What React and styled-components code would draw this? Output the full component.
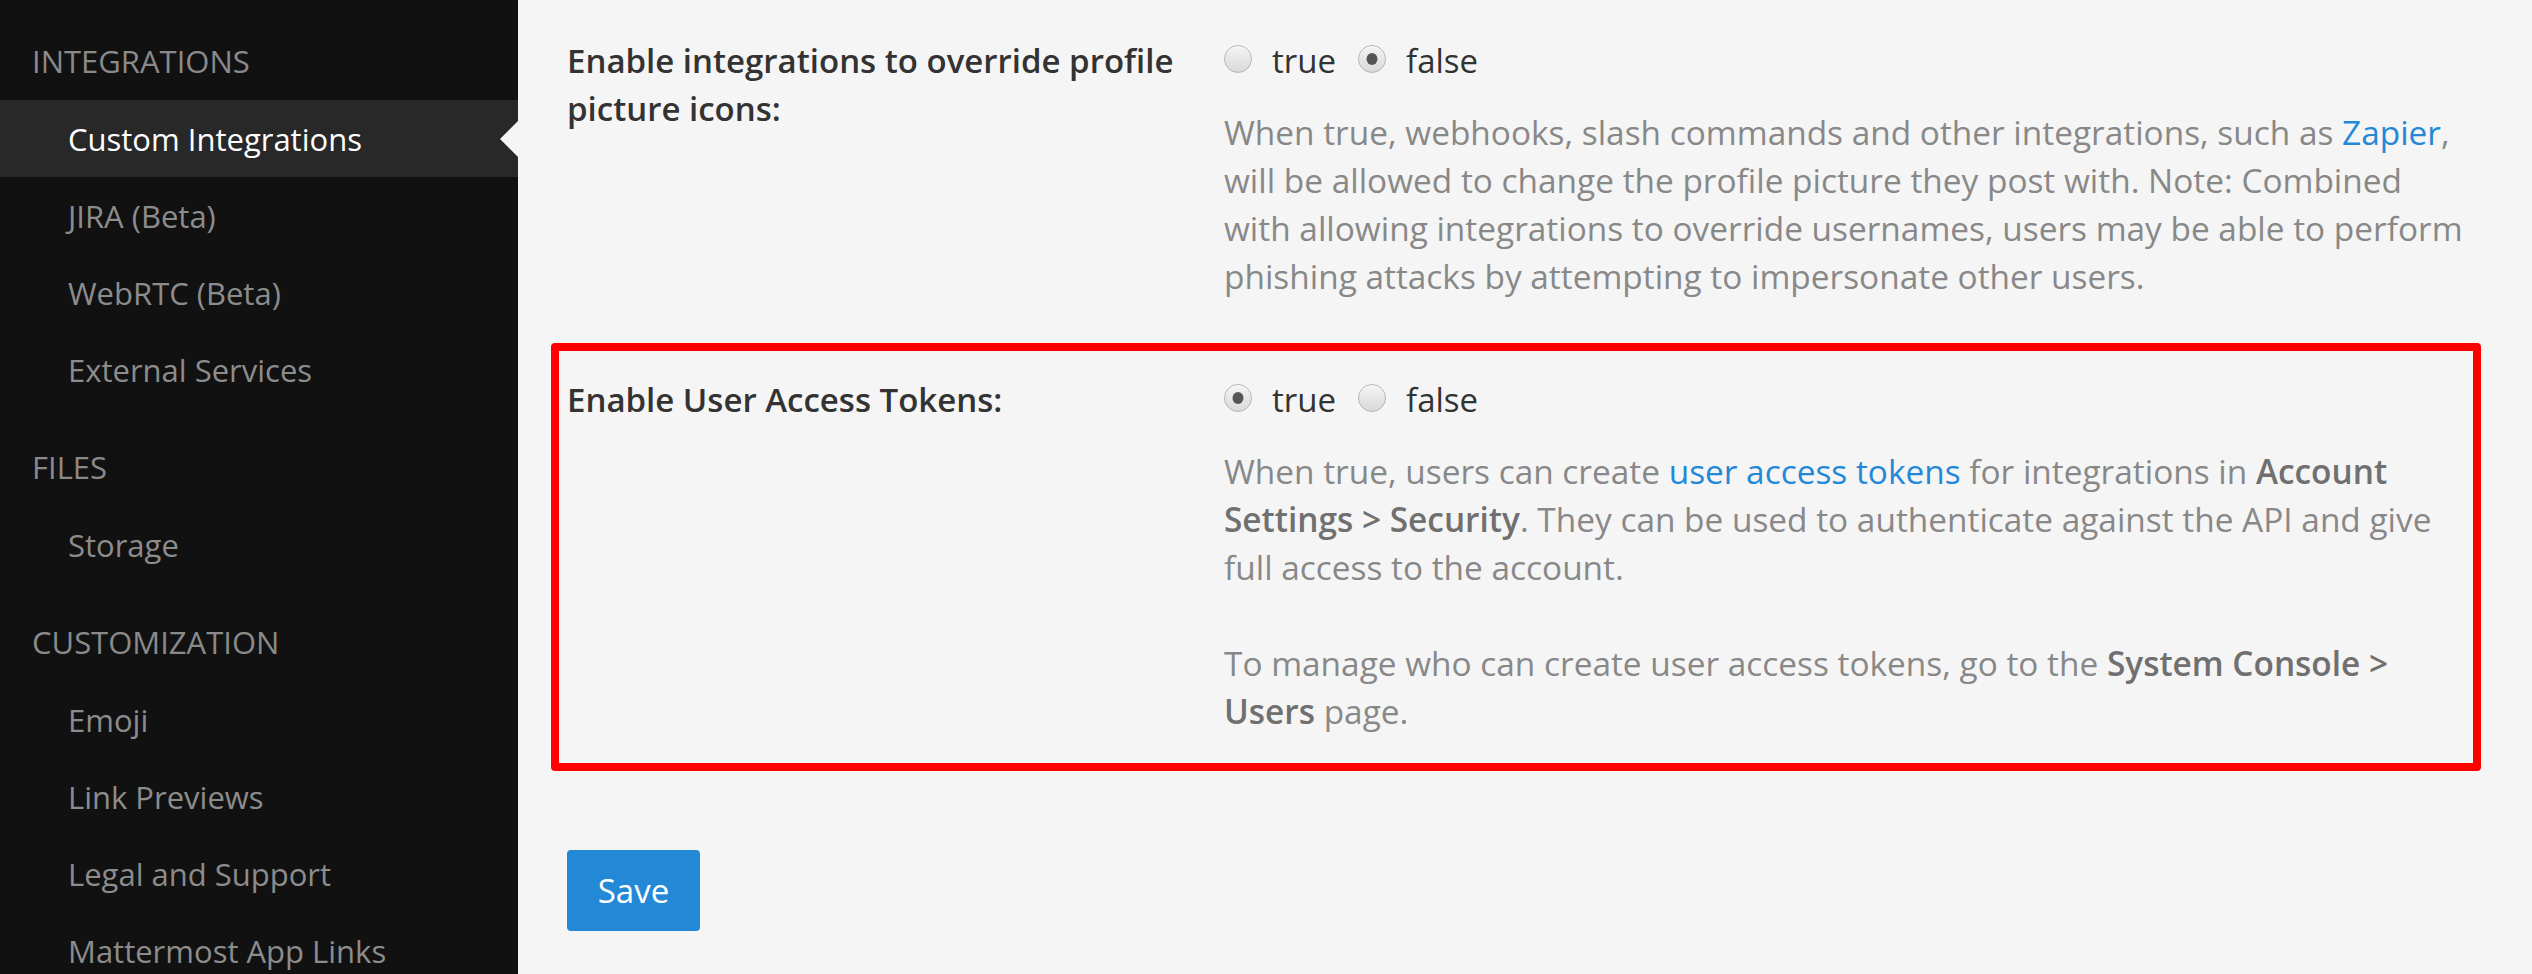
import React from 'react';
import styled, { createGlobalStyle } from 'styled-components';

const GlobalStyle = createGlobalStyle`
  html, body {
    margin: 0;
    padding: 0;
    background: #f5f5f5;
  }
  body {
    font-family: "Open Sans", "Liberation Sans", sans-serif;
    -webkit-font-smoothing: antialiased;
  }
`;

const Page = styled.div`
  display: flex;
  height: 974px;
  overflow: hidden;
  background: #f5f5f5;
`;

const Sidebar = styled.nav`
  width: 518px;
  flex-shrink: 0;
  background: #111111;
  padding-top: 22px;
  box-sizing: border-box;
`;

const Section = styled.div`
  margin-bottom: 20px;
`;

const SectionTitle = styled.div`
  height: 78px;
  display: flex;
  align-items: center;
  padding-left: 32px;
  font-size: 31px;
  color: #8a8a8a;
  text-transform: uppercase;
`;

const NavItem = styled.div`
  position: relative;
  height: 77px;
  display: flex;
  align-items: center;
  padding-left: 68px;
  font-size: 31px;
  color: ${({ active }) => (active ? '#ffffff' : '#8c8c8c')};
  background: ${({ active }) => (active ? '#282828' : 'transparent')};
  cursor: pointer;

  &::after {
    content: '';
    display: ${({ active }) => (active ? 'block' : 'none')};
    position: absolute;
    right: 0;
    top: 50%;
    transform: translateY(-50%);
    border-style: solid;
    border-width: 18px 18px 18px 0;
    border-color: transparent #f5f5f5 transparent transparent;
  }
`;

const Main = styled.main`
  flex: 1;
  padding: 37px 0 0 49px;
  box-sizing: border-box;
`;

const FormGroup = styled.div`
  display: grid;
  grid-template-columns: 657px 1246px;
  width: 1903px;
  margin-bottom: ${({ highlight }) => (highlight ? '30px' : '76px')};
  position: relative;

  ${({ highlight }) =>
    highlight &&
    `
    &::before {
      content: '';
      position: absolute;
      left: -16px;
      top: -33px;
      right: -11px;
      bottom: -36px;
      border: 8px solid #ff0000;
      border-radius: 4px;
      pointer-events: none;
    }
  `}
`;

const Label = styled.label`
  font-size: 33px;
  line-height: 48px;
  font-weight: 600;
  color: #333333;
  padding-right: 24px;
`;

const Control = styled.div`
  display: flex;
  flex-direction: column;
`;

const RadioRow = styled.div`
  display: flex;
  align-items: center;
  height: 48px;
`;

const RadioLabel = styled.label`
  display: flex;
  align-items: center;
  font-size: 33px;
  line-height: 48px;
  color: #333333;
  margin-right: 22px;
  cursor: pointer;
`;

const Radio = styled.input.attrs({ type: 'radio' })`
  appearance: none;
  -webkit-appearance: none;
  width: 28px;
  height: 28px;
  margin: 0 20px 0 0;
  border-radius: 50%;
  border: 1px solid #b5b5b5;
  background: linear-gradient(#f4f4f4, #d9d9d9);
  box-shadow: inset 0 1px 1px rgba(255, 255, 255, 0.8);
  position: relative;
  top: -2px;
  box-sizing: border-box;
  cursor: pointer;

  &:checked::after {
    content: '';
    position: absolute;
    left: 50%;
    top: 50%;
    width: 11px;
    height: 12px;
    transform: translate(-50%, -50%);
    border-radius: 50%;
    background: #555555;
  }
`;

const HelpText = styled.div`
  margin-top: 23px;
  font-size: 33.4px;
  line-height: 48px;
  color: #888888;

  p {
    margin: 0;
  }
  p + p {
    margin-top: 48px;
  }
  b {
    font-weight: 600;
    color: #707070;
  }
`;

const Link = styled.a`
  color: #2389d7;
  text-decoration: none;
`;

const SaveButton = styled.button`
  margin-top: 85px;
  width: 133px;
  height: 81px;
  background: #2389d7;
  color: #ffffff;
  border: none;
  border-radius: 4px;
  font-family: "Open Sans", "Liberation Sans", sans-serif;
  font-size: 33px;
  cursor: pointer;
`;

const sections = [
  {
    title: 'Integrations',
    items: ['Custom Integrations', 'JIRA (Beta)', 'WebRTC (Beta)', 'External Services'],
  },
  { title: 'Files', items: ['Storage'] },
  {
    title: 'Customization',
    items: ['Emoji', 'Link Previews', 'Legal and Support', 'Mattermost App Links'],
  },
];

const BoolSetting = ({ name, value }) => (
  <RadioRow>
    <RadioLabel>
      <Radio name={name} defaultChecked={value === true} />
      true
    </RadioLabel>
    <RadioLabel>
      <Radio name={name} defaultChecked={value === false} />
      false
    </RadioLabel>
  </RadioRow>
);

export default function App() {
  return (
    <Page>
      <GlobalStyle />
      <Sidebar>
        {sections.map((s) => (
          <Section key={s.title}>
            <SectionTitle>{s.title}</SectionTitle>
            {s.items.map((item) => (
              <NavItem key={item} active={item === 'Custom Integrations'}>
                {item}
              </NavItem>
            ))}
          </Section>
        ))}
      </Sidebar>
      <Main>
        <FormGroup>
          <Label>Enable integrations to override profile picture icons:</Label>
          <Control>
            <BoolSetting name="overrideIcons" value={false} />
            <HelpText>
              When true, webhooks, slash commands and other integrations, such as{' '}
              <Link href="#">Zapier</Link>, will be allowed to change the profile picture
              they post with. Note: Combined with allowing integrations to override
              usernames, users may be able to perform phishing attacks by attempting to
              impersonate other users.
            </HelpText>
          </Control>
        </FormGroup>
        <FormGroup highlight>
          <Label>Enable User Access Tokens:</Label>
          <Control>
            <BoolSetting name="accessTokens" value={true} />
            <HelpText>
              <p>
                When true, users can create <Link href="#">user access tokens</Link> for
                integrations in <b>Account Settings &gt; Security</b>. They can be used to
                authenticate against the API and give full access to the account.
              </p>
              <p>
                To manage who can create user access tokens, go to the{' '}
                <b>System Console &gt; Users</b> page.
              </p>
            </HelpText>
          </Control>
        </FormGroup>
        <SaveButton>Save</SaveButton>
      </Main>
    </Page>
  );
}
